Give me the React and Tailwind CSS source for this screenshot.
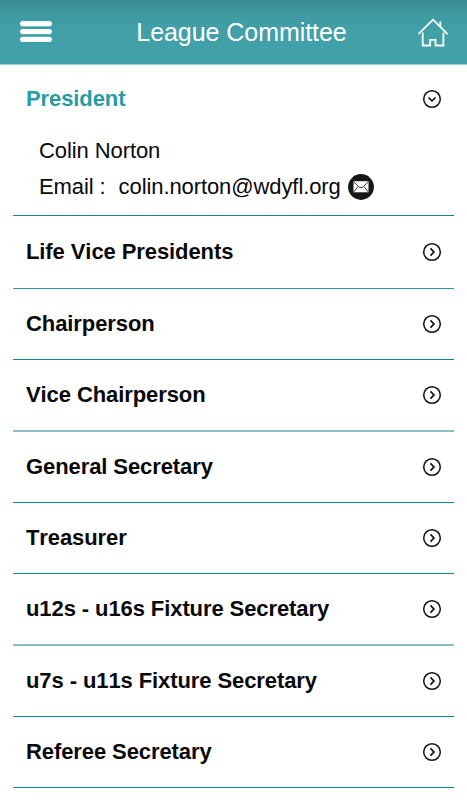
const roles = [
  { name: "Life Vice Presidents", box: "h-[73px] border-b border-[#239fa3]" },
  { name: "Chairperson", box: "h-[71px] pb-px border-b border-[#0f888d]" },
  { name: "Vice Chairperson", box: "h-[72px] border-b-2 border-[#88bfc2]" },
  { name: "General Secretary", box: "h-[71px] pb-px border-b border-[#0f8c91]" },
  { name: "Treasurer", box: "h-[71px] border-b border-[#0f8c91]" },
  { name: "u12s - u16s Fixture Secretary", box: "h-[72px] border-b-2 border-[#88bfc2]" },
  { name: "u7s - u11s Fixture Secretary", box: "h-[71px] pb-px border-b border-[#0f8c91]" },
  { name: "Referee Secretary", box: "h-[71px] border-b border-[#0f8c91]" },
];

function Chevron({ open }) {
  return (
    <svg width="20" height="20" viewBox="0 0 20 20" fill="none" stroke="#111" className="shrink-0">
      <circle cx="10" cy="10" r="8.3" strokeWidth="1.5" />
      <path d={open ? "M6.4 8.5 10 11.9 13.6 8.5" : "M8.5 6.4 11.9 10 8.5 13.6"} strokeWidth="1.7" />
    </svg>
  );
}

export default function App() {
  return (
    <div className="h-[800px] w-[467px] overflow-hidden bg-white font-['Liberation_Sans',Arial,sans-serif] text-[22px] leading-6 tracking-[-0.09px] text-[#090909] [font-kerning:none]">
      <header className="flex h-[65px] items-center justify-between border-b border-[#9fcdd0] bg-linear-to-b from-[#3b8a90] via-[#3f9ba2] via-25% to-[#41a0a8] to-50% pr-[18px] pl-[19px]">
        <svg width="34" height="24" viewBox="0 0 34 24" fill="#fff" stroke="#12929a" strokeWidth="0.8">
          <rect x="0.5" y="0.6" width="33" height="6.3" rx="3.1" />
          <rect x="0.5" y="8.4" width="33" height="6.3" rx="3.1" />
          <rect x="0.5" y="16.2" width="33" height="6.3" rx="3.1" />
        </svg>
        <h1 className="pl-[13px] text-[25px] leading-7 tracking-[-0.05px] text-white">League Committee</h1>
        <svg width="32" height="30" viewBox="0 0 32 30" fill="none" stroke="#fff" strokeWidth="1.8">
          <path d="M1.4 17.2 16 2.7 30.6 17.2" />
          <path d="M23.3 9.8V4.4" />
          <path d="M5.7 15.5V28.5H13.2V22.8H18.5V28.5H26.4V15.5" />
        </svg>
      </header>
      <main className="px-[13px]">
        <section className="h-[151px] border-b border-[#12878c] pr-3 pl-[13px]">
          <div className="flex h-[68px] items-center justify-between">
            <h2 className="font-bold text-[#279ca3]">President</h2>
            <Chevron open />
          </div>
          <div className="pl-[13px]">
            <p className="mt-[6px]">Colin Norton</p>
            <div className="mt-[11px] flex h-[26px] items-center">
              <span>Email :</span>
              <span className="ml-[13px]">colin.norton@wdyfl.org</span>
              <svg width="26" height="26" viewBox="0 0 26 26" className="ml-[7px]">
                <circle cx="13" cy="13" r="12.9" fill="#161616" />
                <path d="M5.5 7.2H20.5V18.3H5.5Z" fill="#fff" />
                <path d="M5.8 7.8 10.8 12.8Q13 14.8 15.2 12.8L20.2 7.8M6 17.8 9.8 12.8M20 17.8 16.2 12.8" fill="none" stroke="#222" strokeWidth="0.9" />
              </svg>
            </div>
          </div>
        </section>
        {roles.map(({ name, box }) => (
          <section key={name} className={`flex items-center justify-between pr-3 pl-[13px] ${box}`}>
            <h2 className="font-bold">{name}</h2>
            <Chevron />
          </section>
        ))}
      </main>
    </div>
  );
}
